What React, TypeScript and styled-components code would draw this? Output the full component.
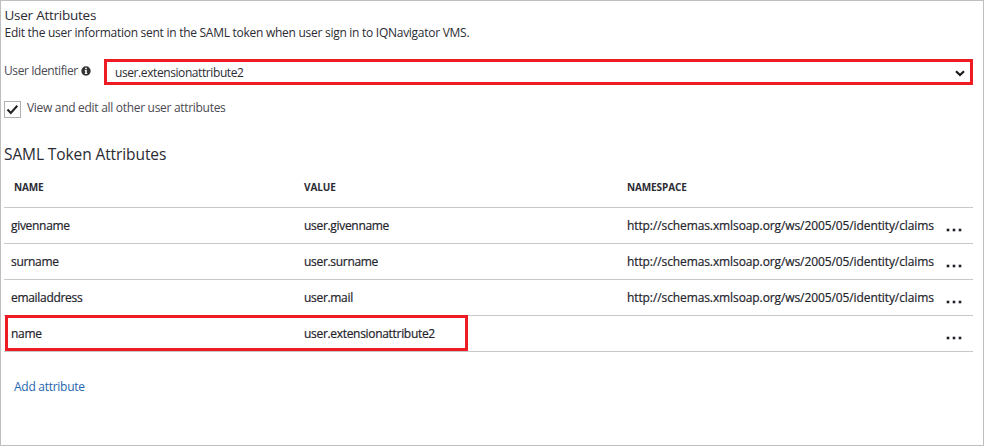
import React from "react";
import styled, { createGlobalStyle } from "styled-components";

const Global = createGlobalStyle`
  *, *::before, *::after { box-sizing: border-box; }
  body { margin: 0; background: #fff; }
`;

const RED = "#ed1c24";
const RULE = "#c8c8c8";

const Page = styled.main`
  width: 984px;
  height: 446px;
  padding: 6px 10px 0 3px;
  border: 1px solid #bfbfbf;
  background: #fff;
  color: #2b2b33;
  font-family: "Open Sans", "Noto Sans", sans-serif;
  font-size: 12px;
  line-height: 18px;
  white-space: nowrap;
  overflow: hidden;
`;

const Title = styled.h1`
  margin: 0;
  padding-left: 0.5px;
  font-size: 13.5px;
  font-weight: 400;
  line-height: 17px;
  letter-spacing: -0.25px;
`;

const Description = styled.p`
  margin: 0;
  padding-left: 0.5px;
  letter-spacing: -0.27px;
`;

const Field = styled.div`
  display: flex;
  margin-top: 17px;
`;

const FieldLabel = styled.label`
  display: flex;
  align-items: center;
  gap: 3px;
  width: 100px;
  height: 24px;
  color: #4a4a52;
  letter-spacing: -0.42px;
`;

const Select = styled.button`
  display: flex;
  flex: 1;
  align-items: center;
  justify-content: space-between;
  height: 26px;
  padding: 2px 5px 0 8px;
  border: 3px solid ${RED};
  background: #fff;
  color: #2b2b33;
  font: inherit;
  letter-spacing: -0.41px;
`;

const CheckRow = styled.label`
  display: flex;
  gap: 6px;
  height: 17px;
  margin-top: 16px;
  color: #4a4a52;
  letter-spacing: -0.3px;
  line-height: 14px;
`;

const CheckBox = styled.span`
  display: flex;
  align-items: center;
  justify-content: center;
  width: 17px;
  height: 17px;
  border: 1px solid #b0b0b0;
`;

const SectionTitle = styled.h2`
  margin: 24px 0 0;
  font-size: 15.5px;
  font-weight: 400;
  line-height: 24px;
  letter-spacing: -0.1px;
`;

const Row = styled.div`
  position: relative;
  display: grid;
  grid-template-columns: 293px 323px 320px 1fr;
  align-items: center;
  height: 36px;
  padding-left: 7px;
  border-bottom: 1px solid ${RULE};
`;

const HeaderRow = styled(Row)`
  height: 42px;
  padding-top: 1px;
  font-size: 10px;
  font-weight: 700;
  letter-spacing: -0.12px;
`;

const HeaderCell = styled.span<{ $indent?: number }>`
  padding-left: ${(p) => p.$indent ?? 0}px;
`;

const Cell = styled.span<{ $spacing?: number }>`
  padding-top: 1px;
  color: #24242c;
  letter-spacing: ${(p) => p.$spacing ?? -0.31}px;
  -webkit-text-stroke: 0.2px #24242c;
`;

const Highlight = styled.span`
  position: absolute;
  top: -1px;
  left: 1px;
  width: 463px;
  height: 36px;
  border: 3px solid ${RED};
`;

const More = styled.button`
  display: flex;
  gap: 4px;
  padding: 8px 0 0;
  border: 0;
  background: none;
`;

const Dot = styled.i`
  width: 2px;
  height: 2px;
  background: #20202a;
  box-shadow: 0 0 0 0.3px #20202a;
`;

const AddLink = styled.a`
  display: inline-block;
  margin: 26px 0 0 10px;
  color: #1f66b0;
  letter-spacing: -0.27px;
`;

const InfoIcon = () => (
  <svg width="10" height="10" viewBox="0 0 10 10">
    <circle cx="5" cy="5" r="4.7" fill="#333" />
    <path d="M4.2 1.8h1.6v1.4H4.2zM3.8 4.1h2v3.1h.6v.8H3.7v-.8h.5V4.9h-.4z" fill="#fff" />
  </svg>
);

const CheckIcon = () => (
  <svg width="13" height="11" viewBox="0 0 13 11">
    <path d="M1.5 5.6 4.8 9 11.3 1.8" fill="none" stroke="#222" strokeWidth="2.1" />
  </svg>
);

const ChevronIcon = () => (
  <svg width="10" height="7" viewBox="0 0 10 7">
    <path d="M1 1.2 5 5 9 1.2" fill="none" stroke="#1a1a1a" strokeWidth="2.2" />
  </svg>
);

const CLAIMS = "http://schemas.xmlsoap.org/ws/2005/05/identity/claims";

const attributes = [
  { name: "givenname", value: "user.givenname", namespace: CLAIMS },
  { name: "surname", value: "user.surname", namespace: CLAIMS },
  { name: "emailaddress", value: "user.mail", namespace: CLAIMS },
  { name: "name", value: "user.extensionattribute2", namespace: "", highlighted: true },
];

export default function App() {
  return (
    <>
      <Global />
      <Page>
        <Title>User Attributes</Title>
        <Description>
          Edit the user information sent in the SAML token when user sign in to IQNavigator VMS.
        </Description>
        <Field>
          <FieldLabel>
            User Identifier
            <InfoIcon />
          </FieldLabel>
          <Select>
            user.extensionattribute2
            <ChevronIcon />
          </Select>
        </Field>
        <CheckRow>
          <CheckBox>
            <CheckIcon />
          </CheckBox>
          View and edit all other user attributes
        </CheckRow>
        <SectionTitle>SAML Token Attributes</SectionTitle>
        <HeaderRow>
          <HeaderCell $indent={3}>NAME</HeaderCell>
          <HeaderCell>VALUE</HeaderCell>
          <HeaderCell>NAMESPACE</HeaderCell>
        </HeaderRow>
        {attributes.map((a) => (
          <Row key={a.name}>
            <Cell>{a.name}</Cell>
            <Cell>{a.value}</Cell>
            <Cell $spacing={-0.1}>{a.namespace}</Cell>
            <More aria-label="More">
              <Dot />
              <Dot />
              <Dot />
            </More>
            {a.highlighted && <Highlight />}
          </Row>
        ))}
        <AddLink>Add attribute</AddLink>
      </Page>
    </>
  );
}
